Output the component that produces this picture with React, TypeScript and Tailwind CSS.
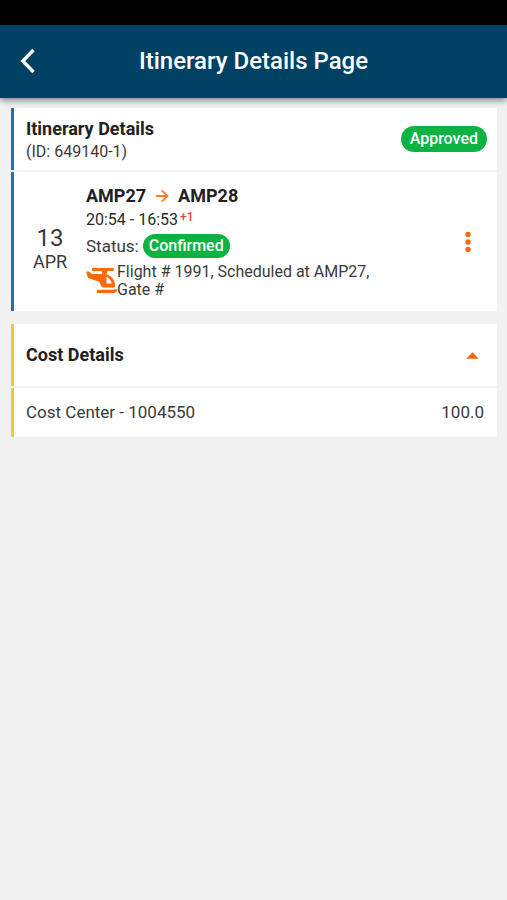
import type { ReactNode } from 'react';

const costs = [{ name: 'Cost Center - 1004550', amount: '100.0' }];

const flight = {
  day: '13',
  month: 'APR',
  from: 'AMP27',
  to: 'AMP28',
  time: '20:54 - 16:53',
  dayShift: '+1',
  status: 'Confirmed',
  note: 'Flight # 1991, Scheduled at AMP27, Gate #',
};

function BackIcon() {
  return (
    <svg width="16" height="26" viewBox="0 0 16 26" fill="none" stroke="currentColor" strokeWidth="3.4" aria-hidden="true">
      <path d="M13.5 2 2.8 13l10.7 11" />
    </svg>
  );
}

function ArrowIcon() {
  return (
    <svg width="14" height="14" viewBox="0 0 14 14" fill="none" stroke="#fb7a22" strokeWidth="1.9" aria-hidden="true">
      <path d="M.8 7h11.4M6.8 1.3 12.5 7l-5.7 5.7" />
    </svg>
  );
}

function HelicopterIcon() {
  return (
    <svg width="31" height="28" viewBox="0 0 31 28" fill="#fd6a08" className="shrink-0" aria-hidden="true">
      <rect x="6" y="1" width="22" height="3" rx="1.2" />
      <path d="M15.5 3h6l-1 4.500h-4z" />
      <path
        fillRule="evenodd"
        d="M1 4.500h2L5.800 7H18c6.500 0 11.300 6 11.300 11.500 0 1.400-.8 2-2.300 2H17.500c-1.200 0-2-.6-2.500-1.700L13.300 15 3 11.300c-.8-.3-1.200-.8-1.400-1.600L.4 5.400c-.1-.6.1-.9.6-.9ZM20.500 9.700v6.700h5.300c-.8-3-2.600-5.500-5.300-6.700Z"
      />
      <path d="M10.800 24c0-.8.5-1.300 1.400-1.300H27l3-.7c.7 0 1 .5 1 1.300 0 1.600-1.700 2.800-4 2.800H12.200c-.9 0-1.400-.5-1.400-1.300z" />
    </svg>
  );
}

function DotsIcon() {
  return (
    <svg width="6" height="22" viewBox="0 0 6 22" fill="#f26a16" aria-hidden="true">
      <circle cx="3" cy="3.5" r="2.7" />
      <circle cx="3" cy="11" r="2.7" />
      <circle cx="3" cy="18.5" r="2.7" />
    </svg>
  );
}

function Badge({ children, className }: { children: ReactNode; className: string }) {
  return (
    <span className={`rounded-full bg-[#0cb342] text-base font-medium text-white ${className}`}>{children}</span>
  );
}

export default function App() {
  return (
    <div className="min-h-screen bg-[#f1f1f1] text-[#3a3a3a]" style={{ fontFamily: 'Roboto, sans-serif' }}>
      <div className="h-[25px] bg-black" />
      <header className="grid h-[73px] grid-cols-[1fr_auto_1fr] items-center bg-[#004164] px-5 pb-[2px] text-white shadow-[0_2px_7px_rgba(0,0,0,0.5)]">
        <button type="button" aria-label="Back" className="justify-self-start">
          <BackIcon />
        </button>
        <h1 className="text-2xl font-medium">Itinerary Details Page</h1>
      </header>

      <main className="space-y-[13px] pt-[10px] pr-[10px] pl-[11px]">
        <section className="space-y-[2px]">
          <div className="flex h-[62px] items-center justify-between border-l-[3px] border-[#1f6dbb] bg-white pr-[10px] pl-3">
            <div className="pt-1">
              <h2 className="text-lg leading-[22px] font-bold text-[#212121]">Itinerary Details</h2>
              <p className="text-base leading-6">(ID: 649140-1)</p>
            </div>
            <Badge className="px-[9px] leading-[26px]">Approved</Badge>
          </div>

          <div className="flex items-center border-l-[3px] border-[#1f6dbb] bg-white py-3">
            <div className="w-[72px] pt-4 text-center">
              <p className="text-2xl leading-6">{flight.day}</p>
              <p className="text-lg leading-6">{flight.month}</p>
            </div>
            <div className="max-w-[300px] flex-1">
              <h3 className="flex items-center gap-[9px] text-lg leading-6 font-bold text-[#212121]">
                {flight.from} <ArrowIcon /> {flight.to}
              </h3>
              <p className="flex text-base leading-6 text-[#2b2b2b]">
                {flight.time}
                <span className="pl-[2px] text-xs leading-[18px] font-medium text-[#ee4444]">{flight.dayShift}</span>
              </p>
              <p className="flex items-center gap-1 pt-[2px] text-[17px] leading-6">
                Status:
                <Badge className="px-[6px] leading-6">{flight.status}</Badge>
              </p>
              <div className="flex items-center pt-[5px]">
                <HelicopterIcon />
                <p className="text-base leading-[18px]">{flight.note}</p>
              </div>
            </div>
            <button type="button" aria-label="More options" className="mr-[26px] ml-auto">
              <DotsIcon />
            </button>
          </div>
        </section>

        <section className="space-y-[2px]">
          <div className="flex h-[62px] items-center justify-between border-l-[3px] border-[#f8c62e] bg-white pr-[18px] pl-3">
            <h2 className="text-lg font-bold text-[#212121]">Cost Details</h2>
            <button type="button" aria-label="Collapse cost details">
              <svg width="13" height="7" viewBox="0 0 13 7" fill="#f96808" aria-hidden="true">
                <path d="M6.5.3 12.8 6.700H.2z" />
              </svg>
            </button>
          </div>
          {costs.map(c => (
            <div key={c.name} className="flex h-[49px] items-center justify-between border-l-[3px] border-[#f8c62e] bg-white pr-[13px] pl-3 text-[17px]">
              <span>{c.name}</span>
              <span>{c.amount}</span>
            </div>
          ))}
        </section>
      </main>
    </div>
  );
}
